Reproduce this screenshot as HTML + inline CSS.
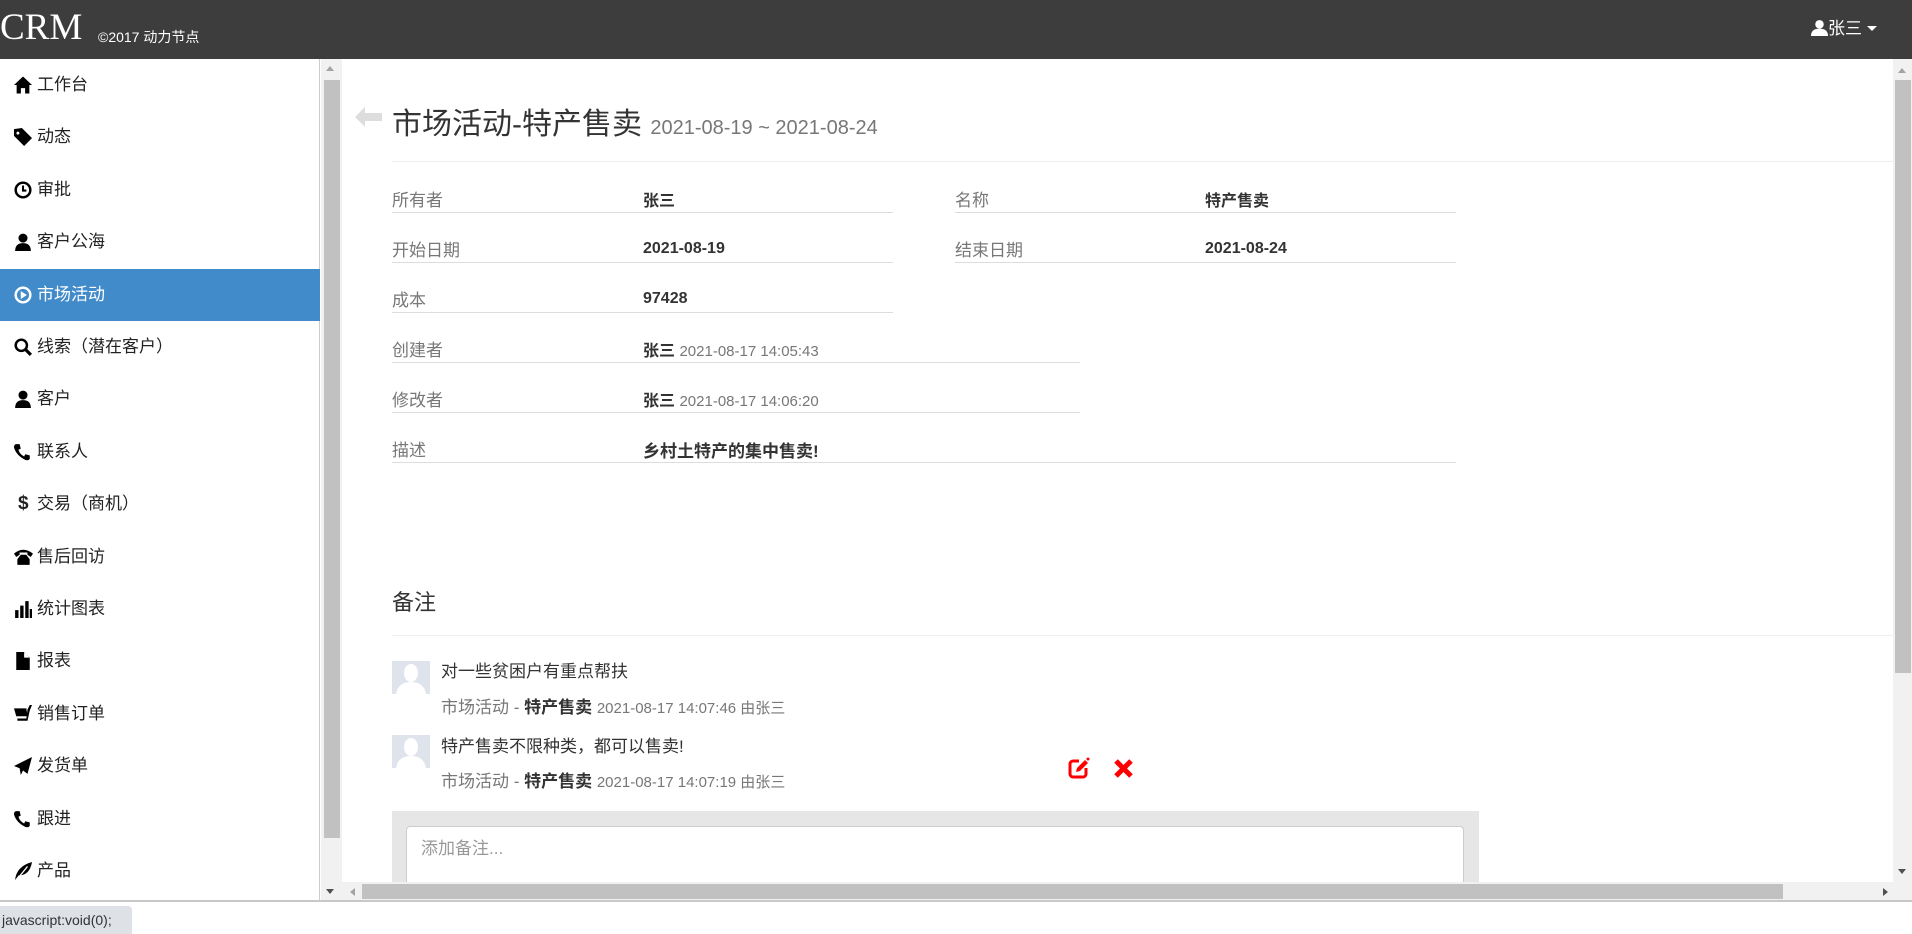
<!DOCTYPE html>
<html><head><meta charset="utf-8"><style>
*{margin:0;padding:0;box-sizing:border-box}
body{width:1912px;height:934px;overflow:hidden;position:relative;background:#fff;font-family:"Liberation Sans","Noto Sans CJK SC",sans-serif;color:#333}
.a{position:absolute;white-space:nowrap}
.nav{position:absolute;left:0;top:0;width:1912px;height:59px;background:#3d3d3d}
.side{position:absolute;left:0;top:59px;width:320px;height:842px;border-right:1px solid #ccc;background:#fff}
.it{position:absolute;left:0;width:320px;height:52px;font-size:17px;color:#222;line-height:52px}
.it svg{position:absolute;left:14px;top:17px}
.it span{position:absolute;left:37px}
.act{background:#428bca;color:#fff}
.lab{font-size:17px;color:#777}
.val{font-size:16px;font-weight:bold;color:#333}
.ln{position:absolute;height:1px;background:#ddd}
</style></head><body>
<div class="nav"></div>
<div class="a" style="left:0;top:6px;font-family:'Liberation Serif',serif;font-size:37px;color:#fff">CRM</div>
<div class="a" style="left:98px;top:27px;font-size:14px;color:#fff">©2017 动力节点</div>
<div class="a" style="left:1811px;top:14px;font-size:17px;color:#fff">
<svg width="17" height="17" viewBox="0 0 16 16" style="vertical-align:-2px"><circle cx="8" cy="5" r="4" fill="#fff"/><path d="M0 16 Q0 9 8 9 Q16 9 16 16Z" fill="#fff"/></svg>张三 <span style="display:inline-block;border-left:5px solid transparent;border-right:5px solid transparent;border-top:5px solid #fff;vertical-align:3px"></span></div>

<div class="side">
<div class="it" style="top:0"><svg width="18" height="18" viewBox="0 0 17 16"><path d="M8.5 0L0 8h2.5v8h4v-5h4v5h4V8H17z" fill="#000"/></svg><span>工作台</span></div>
<div class="it" style="top:52.4px"><svg width="18" height="18" viewBox="0 0 16 16"><path d="M0 1v6l9 9 7-7-9-9z" fill="#000"/><circle cx="3.5" cy="4.5" r="1.3" fill="#fff"/></svg><span>动态</span></div>
<div class="it" style="top:104.8px"><svg width="18" height="18" viewBox="0 0 16 16"><circle cx="8" cy="8" r="6.5" fill="none" stroke="#000" stroke-width="2.2"/><path d="M8 4v4.5h3" fill="none" stroke="#000" stroke-width="1.8"/></svg><span>审批</span></div>
<div class="it" style="top:157.2px"><svg width="18" height="18" viewBox="0 0 16 16"><circle cx="8" cy="4.5" r="4" fill="#000"/><path d="M1 16Q1 9 8 9Q15 9 15 16Z" fill="#000"/></svg><span>客户公海</span></div>
<div class="it act" style="top:209.6px"><svg width="18" height="18" viewBox="0 0 16 16"><circle cx="8" cy="8" r="6.5" fill="none" stroke="#fff" stroke-width="2.2"/><path d="M6 4.5v7l5.5-3.5z" fill="#fff"/></svg><span>市场活动</span></div>
<div class="it" style="top:262px"><svg width="18" height="18" viewBox="0 0 16 16"><circle cx="6.5" cy="6.5" r="5" fill="none" stroke="#000" stroke-width="2.2"/><path d="M10 10l5 5" stroke="#000" stroke-width="2.8"/></svg><span>线索（潜在客户）</span></div>
<div class="it" style="top:314.4px"><svg width="18" height="18" viewBox="0 0 16 16"><circle cx="8" cy="4.5" r="4" fill="#000"/><path d="M1 16Q1 9 8 9Q15 9 15 16Z" fill="#000"/></svg><span>客户</span></div>
<div class="it" style="top:366.8px"><svg width="18" height="18" viewBox="0 0 16 16"><path d="M2 1l3 0 1 4-2 1q1 4 5 6l1-2 4 1 0 3q-1 2-4 1Q2 11 0 4Q0 1 2 1z" fill="#000"/></svg><span>联系人</span></div>
<div class="it" style="top:419.2px"><span style="left:18px;font-weight:bold;font-size:19px">$</span><span style="left:37px">交易（商机）</span></div>
<div class="it" style="top:471.6px"><svg width="19" height="18" viewBox="0 0 17 16"><path d="M0 5Q8 -2 17 5L15 8 12 6V4H5v2L2 8z M3 10l3-4h5l3 4v5H3z" fill="#000"/></svg><span>售后回访</span></div>
<div class="it" style="top:524px"><svg width="18" height="18" viewBox="0 0 16 16"><rect x="1" y="9" width="3" height="7" fill="#000"/><rect x="5.5" y="5" width="3" height="11" fill="#000"/><rect x="10" y="1" width="3" height="15" fill="#000"/><rect x="14" y="8" width="2" height="8" fill="#000"/></svg><span>统计图表</span></div>
<div class="it" style="top:576.4px"><svg width="18" height="18" viewBox="0 0 16 16"><path d="M2 0h7l5 5v11H2z" fill="#000"/><path d="M9 0v5h5" fill="#fff"/></svg><span>报表</span></div>
<div class="it" style="top:628.8px"><svg width="18" height="18" viewBox="0 0 16 16"><path d="M0 3h11l1 7H2z M12 4l2-4h2l-2 5-2 9H3v-2h8z" fill="#000"/></svg><span>销售订单</span></div>
<div class="it" style="top:681.2px"><svg width="18" height="18" viewBox="0 0 16 16"><path d="M16 0L0 8l5 2 1 6 2-4 4 3z" fill="#000"/></svg><span>发货单</span></div>
<div class="it" style="top:733.6px"><svg width="18" height="18" viewBox="0 0 16 16"><path d="M2 1l3 0 1 4-2 1q1 4 5 6l1-2 4 1 0 3q-1 2-4 1Q2 11 0 4Q0 1 2 1z" fill="#000"/></svg><span>跟进</span></div>
<div class="it" style="top:786px"><svg width="18" height="18" viewBox="0 0 16 16"><path d="M1 16Q2 4 16 0Q14 12 4 12z" fill="#000"/><path d="M3 15L12 4" stroke="#fff" stroke-width="1.2"/></svg><span>产品</span></div>
</div>
<div class="a" style="left:321px;top:59px;width:21px;height:842px;background:#f1f1f1"></div>
<div class="a" style="left:324px;top:80px;width:16px;height:758px;background:#c1c1c1"></div>
<div class="a" style="left:326px;top:66px;border-left:4px solid transparent;border-right:4px solid transparent;border-bottom:5px solid #a3a3a3"></div>
<div class="a" style="left:326px;top:889px;border-left:4px solid transparent;border-right:4px solid transparent;border-top:5px solid #505050"></div>
<div class="a" style="left:1893px;top:59px;width:19px;height:823px;background:#f1f1f1"></div>
<div class="a" style="left:1895px;top:80px;width:16px;height:593px;background:#c1c1c1"></div>
<div class="a" style="left:1898px;top:68px;border-left:4px solid transparent;border-right:4px solid transparent;border-bottom:5px solid #a3a3a3"></div>
<div class="a" style="left:1898px;top:869px;border-left:4px solid transparent;border-right:4px solid transparent;border-top:5px solid #505050"></div>
<div class="a" style="left:342px;top:882px;width:1570px;height:19px;background:#f1f1f1"></div>
<div class="a" style="left:362px;top:884px;width:1421px;height:15px;background:#c1c1c1"></div>
<div class="a" style="left:350px;top:888px;border-top:4px solid transparent;border-bottom:4px solid transparent;border-right:5px solid #a3a3a3"></div>
<div class="a" style="left:1883px;top:888px;border-top:4px solid transparent;border-bottom:4px solid transparent;border-left:5px solid #505050"></div>
<div class="a" style="left:0;top:900px;width:1912px;height:2px;background:#c8c8c8"></div>
<div class="a" style="left:0;top:906px;width:132px;height:28px;background:#dee1e6;border-radius:0 4px 0 0;font-size:14px;line-height:28px;padding-left:2px;color:#333">javascript:void(0);</div>

<svg class="a" style="left:355px;top:107px" width="27" height="20" viewBox="0 0 27 20"><path d="M0 10L10 0v6h17v8H10v6z" fill="#ddd"/></svg>
<div class="a" style="left:392px;top:99px;font-size:30px;color:#333">市场活动-特产售卖 <span style="font-size:20px;color:#777">2021-08-19 ~ 2021-08-24</span></div>
<div class="ln" style="left:392px;top:161px;width:1501px;background:#eee"></div>

<div class="a lab" style="left:392px;top:186px">所有者</div><div class="a val" style="left:643px;top:187px">张三</div>
<div class="ln" style="left:392px;top:212px;width:501px"></div>
<div class="a lab" style="left:955px;top:186px">名称</div><div class="a val" style="left:1205px;top:187px">特产售卖</div>
<div class="ln" style="left:955px;top:212px;width:501px"></div>

<div class="a lab" style="left:392px;top:236px">开始日期</div><div class="a val" style="left:643px;top:240px">2021-08-19</div>
<div class="ln" style="left:392px;top:262px;width:501px"></div>
<div class="a lab" style="left:955px;top:236px">结束日期</div><div class="a val" style="left:1205px;top:240px">2021-08-24</div>
<div class="ln" style="left:955px;top:262px;width:501px"></div>

<div class="a lab" style="left:392px;top:286px">成本</div><div class="a val" style="left:643px;top:290px">97428</div>
<div class="ln" style="left:392px;top:312px;width:501px"></div>

<div class="a lab" style="left:392px;top:336px">创建者</div><div class="a val" style="left:643px;top:337px">张三 <span style="font-size:15px;font-weight:normal;color:#777">2021-08-17 14:05:43</span></div>
<div class="ln" style="left:392px;top:362px;width:688px"></div>

<div class="a lab" style="left:392px;top:386px">修改者</div><div class="a val" style="left:643px;top:387px">张三 <span style="font-size:15px;font-weight:normal;color:#777">2021-08-17 14:06:20</span></div>
<div class="ln" style="left:392px;top:412px;width:688px"></div>

<div class="a lab" style="left:392px;top:436px">描述</div><div class="a val" style="left:643px;top:437px;font-size:17px">乡村土特产的集中售卖!</div>
<div class="ln" style="left:392px;top:462px;width:1064px"></div>

<div class="a" style="left:392px;top:585px;font-size:22px;color:#333">备注</div>
<div class="ln" style="left:392px;top:635px;width:1501px;background:#eee"></div>

<svg class="a" style="left:392px;top:661px" width="38" height="33" viewBox="0 0 38 33"><rect width="38" height="33" fill="#dfe3ec"/><ellipse cx="19" cy="12" rx="7" ry="9" fill="#fff"/><path d="M4 33Q6 21 19 21Q32 21 34 33Z" fill="#fff"/></svg>
<div class="a" style="left:441px;top:657px;font-size:17px;color:#333">对一些贫困户有重点帮扶</div>
<div class="a" style="left:441px;top:693px;font-size:17px;color:#777">市场活动 - <b style="color:#333">特产售卖</b> <span style="font-size:15px">2021-08-17 14:07:46 由张三</span></div>

<svg class="a" style="left:392px;top:735px" width="38" height="33" viewBox="0 0 38 33"><rect width="38" height="33" fill="#dfe3ec"/><ellipse cx="19" cy="12" rx="7" ry="9" fill="#fff"/><path d="M4 33Q6 21 19 21Q32 21 34 33Z" fill="#fff"/></svg>
<div class="a" style="left:441px;top:732px;font-size:17px;color:#333">特产售卖不限种类，都可以售卖!</div>
<div class="a" style="left:441px;top:767px;font-size:17px;color:#777">市场活动 - <b style="color:#333">特产售卖</b> <span style="font-size:15px">2021-08-17 14:07:19 由张三</span></div>

<svg class="a" style="left:1067px;top:756px" width="24" height="24" viewBox="0 0 24 24"><path d="M12 5H6a3 3 0 0 0-3 3v10a3 3 0 0 0 3 3h10a3 3 0 0 0 3-3v-6" fill="none" stroke="#f00" stroke-width="3"/><path d="M9 16l1-4 8-8 3 3-8 8z" fill="#f00"/><circle cx="21" cy="3" r="1.5" fill="#f00"/></svg>
<svg class="a" style="left:1113px;top:758px" width="21" height="21" viewBox="0 0 21 21"><path d="M3 3L18 18M18 3L3 18" stroke="#f00" stroke-width="5"/></svg>

<div class="a" style="left:392px;top:811px;width:1087px;height:71px;background:#e6e6e6"></div>
<div class="a" style="left:406px;top:826px;width:1058px;height:56px;background:#fff;border:1px solid #ccc;border-bottom:none;border-radius:4px 4px 0 0"></div>
<div class="a" style="left:421px;top:834px;font-size:17px;color:#999">添加备注...</div>
</body></html>
